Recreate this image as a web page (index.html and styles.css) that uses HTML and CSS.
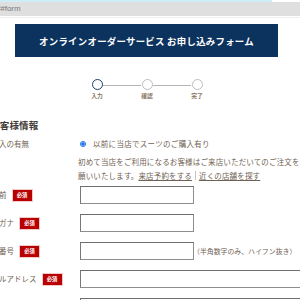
FILE: index.html
```html
<!DOCTYPE html>
<html lang="ja">
<head>
  <meta charset="UTF-8">
  <title>オンラインオーダーサービス お申し込みフォーム</title>
  <link rel="stylesheet" href="styles.css">
</head>
<body>
  <div class="tabstrip"></div>
  <div class="urlbar">/#form</div>

  <h1 class="banner">オンラインオーダーサービス お申し込みフォーム</h1>

  <div class="steps">
    <div class="step current"><span class="dot"></span><span class="step-label">入力</span></div>
    <span class="step-line"></span>
    <div class="step"><span class="dot"></span><span class="step-label">確認</span></div>
    <span class="step-line"></span>
    <div class="step"><span class="dot"></span><span class="step-label">完了</span></div>
  </div>

  <form id="form" class="form">
    <h2 class="section-title">お客様情報</h2>

    <div class="row row-radio">
      <div class="label">ご購入の有無</div>
      <div class="field">
        <label class="radio"><input type="radio" name="history" checked> 以前に当店でスーツのご購入有り</label>
        <p class="note">初めて当店をご利用になるお客様はご来店いただいてのご注文をお願いいたします。<a href="#">来店予約をする</a><span class="sep">|</span><a href="#">近くの店舗を探す</a></p>
      </div>
    </div>

    <div class="row">
      <div class="label">お名前<span class="req">必須</span></div>
      <div class="field"><input type="text" class="input short"></div>
    </div>
    <div class="row">
      <div class="label">フリガナ<span class="req">必須</span></div>
      <div class="field"><input type="text" class="input short"></div>
    </div>
    <div class="row">
      <div class="label">電話番号<span class="req">必須</span></div>
      <div class="field"><input type="tel" class="input short"><span class="hint">（半角数字のみ、ハイフン抜き）</span></div>
    </div>
    <div class="row">
      <div class="label">メールアドレス<span class="req">必須</span></div>
      <div class="field"><input type="email" class="input wide"></div>
    </div>
    <div class="row">
      <div class="label">メールアドレス（確認）</div>
      <div class="field"><input type="email" class="input wide"></div>
    </div>
  </form>
</body>
</html>
```

FILE: styles.css
```css
body { margin: 0; font-family: "Noto Sans CJK JP", "Noto Sans", sans-serif; color: #6f6253; background: #fff; overflow: hidden; }
.tabstrip { width: 272px; height: 2px; background: #cdeef6; }
.urlbar { height: 14px; background: #dfdfdf; color: #7a7a7a; font: 8px "Liberation Sans", sans-serif; line-height: 14px; margin-left: -2px; border-bottom: 1px solid #fff; box-shadow: 0 1px 0 #eee; }

.banner { margin: 7px 0 0 15px; width: 263px; height: 33px; display: flex; align-items: center; justify-content: center; background: #0b335e; color: #fff; font-size: 9.4px; font-weight: bold; letter-spacing: .3px; }

.steps { display: flex; margin: 22px 0 0 91px; }
.step { width: 12px; display: flex; flex-direction: column; align-items: center; }
.dot { width: 9px; height: 9px; border: 1.5px solid #bdbdbd; border-radius: 50%; background: #fff; }
.step.current .dot { border-color: #1d3f67; }
.step-label { margin-top: 3px; font-size: 5.8px; line-height: 6px; font-weight: bold; color: #86765d; white-space: nowrap; }
.step-line { width: 38px; height: 1px; margin-top: 6px; background: #b5b5b5; }

.section-title { margin: 20px 0 0 -10px; font-size: 9.5px; line-height: 12px; font-weight: bold; color: #3f3a35; letter-spacing: .2px; }

.row { display: grid; grid-template-columns: 96px 1fr; align-items: center; margin-left: -16px; height: 18px; margin-top: 10px; }
.row-radio { align-items: start; height: auto; margin-top: 7px; }
.row-radio + .row { margin-top: 3px; }
.label { display: flex; align-items: center; gap: 6px; font-size: 7.5px; line-height: 12px; white-space: nowrap; }
.req { display: inline-block; width: 19px; height: 11px; line-height: 11px; text-align: center; background: #b80000; color: #fff; font-size: 5.3px; font-weight: bold; outline: 1px solid #f1c9c9; }

.field { display: flex; align-items: center; font-size: 7.5px; white-space: nowrap; }
.row-radio .field { display: block; white-space: normal; }
.radio { display: flex; align-items: center; line-height: 12px; letter-spacing: .3px; }
.radio input { width: 6px; height: 6px; margin: 0 7px 0 0; accent-color: #1a73e8; }
.note { margin: 5px 0 0 -2px; line-height: 14px; letter-spacing: .15px; width: 234px; }
.note a { color: inherit; }
.sep { display: inline-block; width: 1px; height: 9px; margin: 0 3px; vertical-align: -1px; overflow: hidden; color: transparent; background: #c4c4c4; }

.input { box-sizing: border-box; height: 18px; margin: 0; border: 1px solid #8d8d8d; border-top-color: #6f6f6f; border-left-color: #777; background: #fff; }
.short { width: 114px; }
.wide { width: 240px; }
.hint { font-size: 6.9px; margin-left: -1px; }
```
